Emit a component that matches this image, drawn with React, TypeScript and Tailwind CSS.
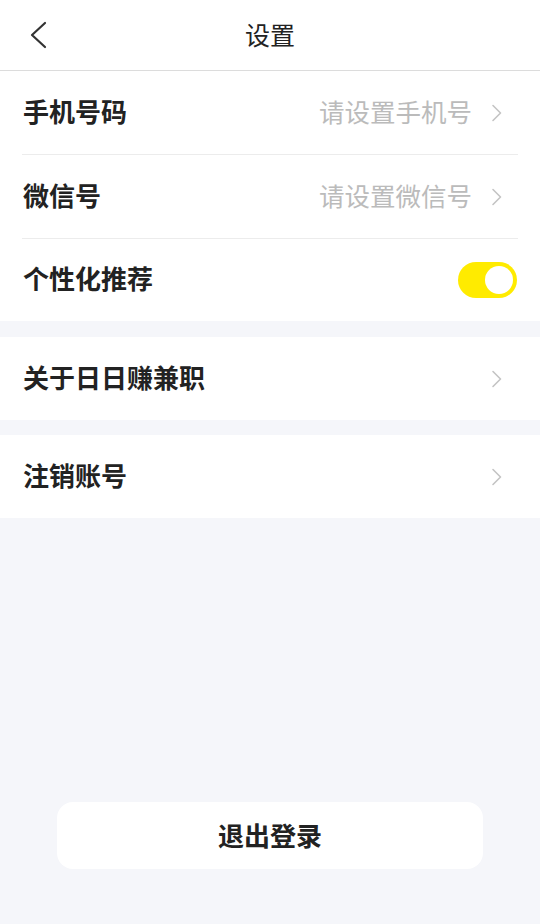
import { ReactNode, useState } from 'react';

const FONT = '"Noto Sans CJK SC", "Noto Sans", sans-serif';

function Chevron() {
  return (
    <svg width="12" height="18" viewBox="0 0 12 18" fill="none" className="ml-[19px]">
      <path d="M2 1.5L9.5 9L2 16.5" stroke="#c4c4c4" strokeWidth="1.6" strokeLinecap="round" strokeLinejoin="round" />
    </svg>
  );
}

interface RowProps {
  label: string;
  value?: string;
  right?: ReactNode;
  divider?: boolean;
  height?: string;
}

function Row({ label, value, right, divider, height = 'h-[83px]' }: RowProps) {
  return (
    <div className="bg-white">
      <div className={`flex items-center pl-[23px] pr-[37px] ${height}`}>
        <span className="pb-[4px] text-[26px] font-bold text-[#222] leading-none">{label}</span>
        <div className="flex-1" />
        {value && <span className="pb-[4px] text-[25.5px] text-[#bbbbbb] leading-none">{value}</span>}
        {right ?? <Chevron />}
      </div>
      {divider && <div className="mx-[22px] h-px bg-[#ececec]" />}
    </div>
  );
}

function Toggle() {
  const [on, setOn] = useState(true);
  return (
    <button
      onClick={() => setOn(!on)}
      className={`relative -mr-[14px] h-[36px] w-[59px] rounded-full ${on ? 'bg-[#ffeb00]' : 'bg-[#e5e5e5]'}`}
    >
      <span
        className={`absolute top-[4px] h-[28px] w-[28px] rounded-full bg-white ${on ? 'right-[4px]' : 'left-[4px]'}`}
      />
    </button>
  );
}

export default function App() {
  return (
    <div className="flex min-h-screen flex-col bg-[#f5f6fa]" style={{ fontFamily: FONT }}>
      <header className="relative flex h-[71px] items-center justify-center border-b border-[#dcdcdc] bg-white">
        <svg width="20" height="30" viewBox="0 0 20 30" fill="none" className="absolute left-[28px] top-[20px]">
          <path d="M17 3L4 15L17 27" stroke="#333" strokeWidth="2.2" strokeLinecap="round" strokeLinejoin="round" />
        </svg>
        <span className="pb-[2px] text-[25px] text-[#222] leading-none">设置</span>
      </header>

      <Row label="手机号码" value="请设置手机号" divider />
      <Row label="微信号" value="请设置微信号" divider />
      <Row label="个性化推荐" right={<Toggle />} height="h-[82px]" />

      <div className="mt-[16px]">
        <Row label="关于日日赚兼职" />
      </div>
      <div className="mt-[15px]">
        <Row label="注销账号" />
      </div>

      <div className="flex-1" />

      <div className="mx-[57px] mb-[55px] flex h-[67px] items-center justify-center rounded-[16px] bg-white">
        <span className="pb-[2px] text-[26px] font-bold text-[#222] leading-none">退出登录</span>
      </div>
    </div>
  );
}
